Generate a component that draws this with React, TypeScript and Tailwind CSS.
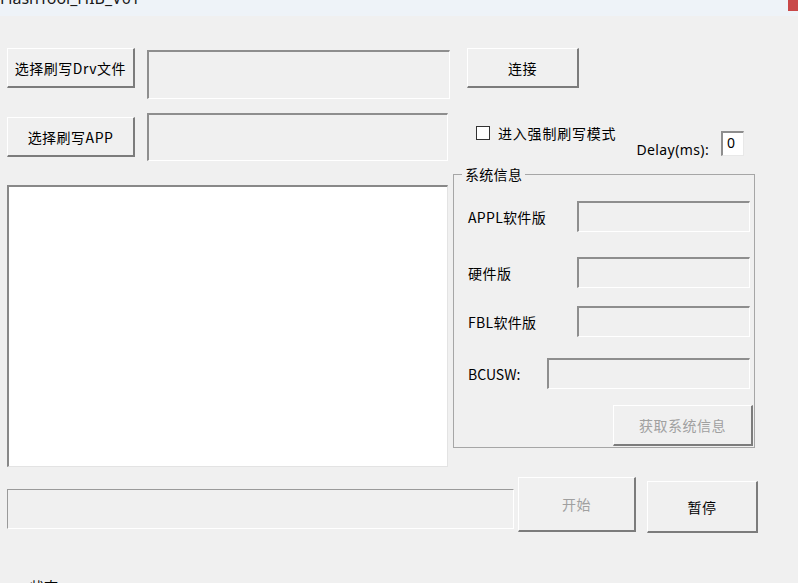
import React from "react";

const btn =
  "flex items-center justify-center bg-[#f0f0f0] border-t border-l border-b-2 border-r-2 border-t-white border-l-white border-b-[#7c7c7c] border-r-[#7c7c7c] text-[14px] tracking-[0.5px] leading-[16px]";
const tb =
  "bg-[#f0f0f0] border-t-2 border-l-2 border-b border-r border-t-[#8e8e8e] border-l-[#8e8e8e] border-b-white border-r-white";

export default function App() {
  return (
    <div className="w-[798px] h-[583px] overflow-hidden bg-[#f0f0f0] flex flex-col text-black font-['Noto_Sans_CJK_SC','Noto_Sans',sans-serif]">
      {/* title bar */}
      <div className="h-[16px] shrink-0 bg-[#eef3f8] flex justify-between overflow-hidden">
        <div className="text-[16px] leading-[16px] -mt-[10px] text-[#1a1a1a] font-['Noto_Sans','Noto_Sans_CJK_SC',sans-serif]">
          FlashTool_HIB_V01
        </div>
        <div className="w-[10px] h-[11px] bg-[#c94848]" />
      </div>

      {/* row 1 */}
      <div className="flex items-start pl-[7px] mt-[32px] h-[51px] shrink-0">
        <div className={`${btn} w-[128px] h-[40px]`}>选择刷写Drv文件</div>
        <div className={`${tb} ml-[12px] mt-[2px] w-[303px] h-[49px]`} />
        <div className={`${btn} ml-[17px] w-[112px] h-[40px]`}>连接</div>
      </div>

      {/* row 2 */}
      <div className="flex items-start pl-[7px] mt-[14px] h-[48px] shrink-0">
        <div className={`${btn} mt-[4px] w-[128px] h-[40px]`}>选择刷写APP</div>
        <div className={`${tb} ml-[12px] w-[301px] h-[48px]`} />
        <div className="ml-[28px] mt-[12px] flex items-center">
          <div className="w-[14px] h-[14px] bg-white border border-[#333]" />
          <span className="ml-[8px] text-[14px] tracking-[0.8px] leading-[16px]">进入强制刷写模式</span>
        </div>
        <div className="ml-[20px] mt-[18px] flex items-end">
          <span className="text-[14px] leading-[16px] mb-[-2px] tracking-[0.4px] font-['Noto_Sans','Noto_Sans_CJK_SC',sans-serif]">
            Delay(ms):
          </span>
          <div className="ml-[12px] w-[23px] h-[25px] bg-white border-t-2 border-l-2 border-b border-r border-t-[#8e8e8e] border-l-[#8e8e8e] border-b-[#e8e8e8] border-r-[#e8e8e8] text-[14px] leading-[16px] pl-[4px] pt-[2px] font-['Noto_Sans',sans-serif]">
            0
          </div>
        </div>
      </div>

      {/* row 3 */}
      <div className="flex items-start pl-[7px] mt-[5px] shrink-0">
        <div className="mt-[19px] w-[441px] h-[282px] bg-white border-t-2 border-l-2 border-b border-r border-t-[#888] border-l-[#888] border-b-[#e3e3e3] border-r-[#e3e3e3]" />
        <fieldset className="ml-[5px] w-[302px] h-[282px] border border-[#a6a6a6]">
          <legend className="ml-[8px] px-[3px] text-[14px] leading-[16px] tracking-[0.3px]">系统信息</legend>
          <div className="flex flex-col">
            <div className="mt-[19px] flex items-center pl-[14px] pr-[4px] h-[31px]">
              <span className="flex-1 text-[14px] leading-[16px] tracking-[0.3px]">APPL软件版</span>
              <div className={`${tb} w-[173px] h-[31px]`} />
            </div>
            <div className="mt-[25px] flex items-center pl-[14px] pr-[4px] h-[31px]">
              <span className="flex-1 text-[14px] leading-[16px] tracking-[0.5px]">硬件版</span>
              <div className={`${tb} w-[173px] h-[31px]`} />
            </div>
            <div className="mt-[18px] flex items-center pl-[14px] pr-[4px] h-[31px]">
              <span className="flex-1 text-[14px] leading-[16px] tracking-[0.3px]">FBL软件版</span>
              <div className={`${tb} w-[173px] h-[31px]`} />
            </div>
            <div className="mt-[21px] flex items-center pl-[14px] pr-[4px] h-[31px]">
              <span className="flex-1 text-[14px] leading-[16px]">BCUSW:</span>
              <div className={`${tb} w-[203px] h-[31px]`} />
            </div>
            <div className="mt-[16px] self-end mr-[1px]">
              <div className={`${btn} w-[140px] h-[41px] text-[#a0a0a0]`}>获取系统信息</div>
            </div>
          </div>
        </fieldset>
      </div>

      {/* row 4 */}
      <div className="flex items-start pl-[7px] mt-[10px] shrink-0">
        <div className="mt-[12px] w-[507px] h-[40px] bg-[#f0f0f0] border border-t-[#9a9a9a] border-l-[#9a9a9a] border-b-white border-r-white" />
        <div className={`${btn} ml-[4px] w-[118px] h-[55px] text-[#a0a0a0]`}>开始</div>
        <div className={`${btn} ml-[11px] mt-[4px] w-[111px] h-[52px]`}>暂停</div>
      </div>

      <div className="mt-[45px] pl-[30px] text-[14px] leading-[16px] shrink-0">状态:</div>
    </div>
  );
}
